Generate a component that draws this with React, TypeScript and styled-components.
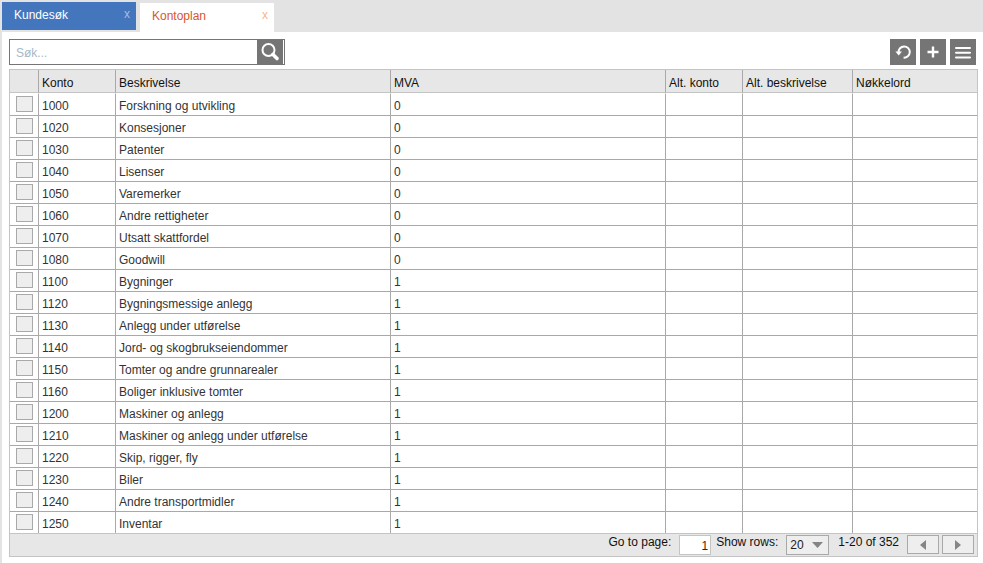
import React from "react";
import styled, { createGlobalStyle } from "styled-components";

const GlobalStyle = createGlobalStyle`
  *, *::before, *::after { box-sizing: border-box; }
  html, body { margin: 0; background: #fff; }
  body, button, input, select {
    font-family: "Liberation Sans", Arial, Helvetica, sans-serif;
    font-size: 12px;
  }
  body { color: #333; line-height: 16px; }
  button, input, select { margin: 0; padding: 0; border-radius: 0; }
`;

const Page = styled.div`
  min-height: 100vh;
  border-left: 2px solid #e3e3e3;
`;

const TabBar = styled.nav`
  display: flex;
  align-items: flex-end;
  gap: 4px;
  height: 32px;
  background: #e3e3e3;
`;

const Tab = styled.div<{ $active?: boolean }>`
  display: flex;
  justify-content: space-between;
  width: 134px;
  height: ${(p) => (p.$active ? 29 : 28)}px;
  margin-bottom: ${(p) => (p.$active ? 0 : 2)}px;
  padding: 5px 6px 0 12px;
  background: ${(p) => (p.$active ? "#fff" : "#4376bc")};
  color: ${(p) => (p.$active ? "#d9562b" : "#fff")};
`;

const TabLabel = styled.button`
  height: 16px;
  border: 0;
  background: none;
  color: inherit;
`;

const TabClose = styled.button<{ $active?: boolean }>`
  height: 14px;
  border: 0;
  background: none;
  line-height: 14px;
  color: ${(p) => (p.$active ? "#f1b795" : "#a5bee0")};
`;

const Toolbar = styled.div`
  display: flex;
  justify-content: space-between;
  padding: 7px 7px 4px;
`;

const SearchBox = styled.form`
  display: flex;
  width: 276px;
  height: 26px;
  padding-right: 1px;
  border: 1px solid #757575;
`;

const SearchInput = styled.input`
  flex: 1;
  min-width: 0;
  padding: 2px 6px 0;
  border: 0;
  outline: 0;
  &::placeholder { color: #a5bac8; opacity: 1; }
`;

const IconButton = styled.button`
  display: flex;
  align-items: center;
  justify-content: center;
  width: 26px;
  height: 100%;
  border: 0;
  background: #757575;
`;

const Actions = styled.div`
  display: flex;
  gap: 4px;
  height: 26px;
`;

const Panel = styled.section`
  margin: 0 5px 0 7px;
  border: 1px solid #c4c4c4;
`;

const Grid = styled.table`
  width: 100%;
  table-layout: fixed;
  border-spacing: 0;
`;

const Column = styled.col<{ $width?: number }>`
  width: ${(p) => (p.$width ? `${p.$width}px` : "auto")};
`;

const HeadCell = styled.th`
  height: 23px;
  padding: 3px 3px 0;
  border-right: 1px solid #a9a9a9;
  border-bottom: 1px solid #c4c4c4;
  background: #e7e7e7;
  color: #111;
  font-weight: normal;
  text-align: left;
  &:last-child { border-right: 0; }
`;

const Cell = styled.td`
  height: 22px;
  padding: 4px 3px 0;
  border-right: 1px solid #a9a9a9;
  border-top: 1px solid #a9a9a9;
  vertical-align: top;
  &:last-child { border-right: 0; }
  tr:first-child > & { border-top-color: #fff; }
`;

const CheckCell = styled(Cell)`
  padding: 2px 6px 0;
`;

const Checkbox = styled.input`
  appearance: none;
  display: block;
  width: 17px;
  height: 16px;
  margin: 0;
  border: 1px solid #a9a9a9;
  background: #eee;
  &:checked { background: #757575; }
`;

const Footer = styled.footer`
  display: flex;
  justify-content: flex-end;
  height: 23px;
  padding-right: 3px;
  border-top: 1px solid #c4c4c4;
  background: #e7e7e7;
  color: #111;
`;

const PagerLabel = styled.label`
  display: flex;
  gap: 8px;
  margin-right: 5px;
`;

const PageInput = styled.input`
  width: 32px;
  height: 20px;
  margin-top: 1px;
  padding: 1px 2px 0;
  border: 1px solid #c4c4c4;
  color: #8b0000;
  text-align: right;
`;

const SelectWrap = styled.span`
  display: grid;
  align-items: center;
  width: 43px;
  height: 20px;
  margin-top: 1px;
  margin-right: 4px;
  & > * { grid-area: 1 / 1; }
  & > svg { justify-self: end; margin-right: 6px; pointer-events: none; }
`;

const RowsSelect = styled.select`
  appearance: none;
  width: 100%;
  height: 20px;
  padding: 0 3px;
  border: 1px solid #a9a9a9;
  background: #eee;
  color: #222;
`;

const Range = styled.span`
  margin-right: 8px;
`;

const PageButton = styled.button`
  display: flex;
  align-items: center;
  justify-content: center;
  width: 32px;
  height: 19px;
  margin-top: 1px;
  margin-left: 3px;
  border: 1px solid #a9a9a9;
  background: #eee;
  &:first-of-type { margin-left: 0; }
`;

const accounts: [string, string, string][] = [
  ["1000", "Forskning og utvikling", "0"],
  ["1020", "Konsesjoner", "0"],
  ["1030", "Patenter", "0"],
  ["1040", "Lisenser", "0"],
  ["1050", "Varemerker", "0"],
  ["1060", "Andre rettigheter", "0"],
  ["1070", "Utsatt skattfordel", "0"],
  ["1080", "Goodwill", "0"],
  ["1100", "Bygninger", "1"],
  ["1120", "Bygningsmessige anlegg", "1"],
  ["1130", "Anlegg under utførelse", "1"],
  ["1140", "Jord- og skogbrukseiendommer", "1"],
  ["1150", "Tomter og andre grunnarealer", "1"],
  ["1160", "Boliger inklusive tomter", "1"],
  ["1200", "Maskiner og anlegg", "1"],
  ["1210", "Maskiner og anlegg under utførelse", "1"],
  ["1220", "Skip, rigger, fly", "1"],
  ["1230", "Biler", "1"],
  ["1240", "Andre transportmidler", "1"],
  ["1250", "Inventar", "1"],
];

const headings = ["Konto", "Beskrivelse", "MVA", "Alt. konto", "Alt. beskrivelse", "Nøkkelord"];

export default function App() {
  return (
    <>
      <GlobalStyle />
      <Page>
        <TabBar>
          <Tab>
            <TabLabel type="button">Kundesøk</TabLabel>
            <TabClose type="button" aria-label="Lukk Kundesøk">x</TabClose>
          </Tab>
          <Tab $active>
            <TabLabel type="button">Kontoplan</TabLabel>
            <TabClose type="button" $active aria-label="Lukk Kontoplan">x</TabClose>
          </Tab>
        </TabBar>
        <Toolbar>
          <SearchBox onSubmit={(e) => e.preventDefault()}>
            <SearchInput type="text" placeholder="Søk..." aria-label="Søk" />
            <IconButton type="submit" aria-label="Søk">
              <svg width="20" height="20" viewBox="0 0 20 20" fill="none" stroke="#fff">
                <circle cx="8.5" cy="8" r="6" strokeWidth="2" />
                <path d="M13 12.5 L17 16.5" strokeWidth="3.6" strokeLinecap="round" />
              </svg>
            </IconButton>
          </SearchBox>
          <Actions>
            <IconButton type="button" aria-label="Oppdater">
              <svg width="18" height="18" viewBox="0 0 18 18" fill="none">
                <path d="M4.6 9.5 A5.6 5.6 0 1 1 9.6 14.6" stroke="#fff" strokeWidth="2" />
                <path d="M1.4 8.4 H8 L4.7 12.4 Z" fill="#fff" />
              </svg>
            </IconButton>
            <IconButton type="button" aria-label="Ny">
              <svg width="12" height="12" viewBox="0 0 12 12">
                <path d="M6 0.5 V11.5 M0.5 6 H11.5" stroke="#fff" strokeWidth="2.4" />
              </svg>
            </IconButton>
            <IconButton type="button" aria-label="Meny">
              <svg width="16" height="14" viewBox="0 0 16 14">
                <path d="M1 3 H15 M1 7.7 H15 M1 12.4 H15" stroke="#fff" strokeWidth="2" strokeLinecap="round" />
              </svg>
            </IconButton>
          </Actions>
        </Toolbar>
        <Panel>
          <Grid>
            <colgroup>
              <Column $width={29} />
              <Column $width={77} />
              <Column />
              <Column />
              <Column $width={77} />
              <Column $width={110} />
              <Column $width={124} />
            </colgroup>
            <thead>
              <tr>
                <HeadCell aria-label="Velg" />
                {headings.map((h) => (
                  <HeadCell key={h} scope="col">{h}</HeadCell>
                ))}
              </tr>
            </thead>
            <tbody>
              {accounts.map(([no, name, vat]) => (
                <tr key={no}>
                  <CheckCell>
                    <Checkbox type="checkbox" aria-label={`Velg ${no}`} />
                  </CheckCell>
                  <Cell>{no}</Cell>
                  <Cell>{name}</Cell>
                  <Cell>{vat}</Cell>
                  <Cell />
                  <Cell />
                  <Cell />
                </tr>
              ))}
            </tbody>
          </Grid>
          <Footer>
            <PagerLabel>
              Go to page:
              <PageInput type="text" defaultValue="1" />
            </PagerLabel>
            <PagerLabel>
              Show rows:
              <SelectWrap>
                <RowsSelect defaultValue="20">
                  <option>10</option>
                  <option>20</option>
                  <option>50</option>
                </RowsSelect>
                <svg width="11" height="6" viewBox="0 0 11 6">
                  <path d="M0 0 H11 L5.5 6 Z" fill="#858585" />
                </svg>
              </SelectWrap>
            </PagerLabel>
            <Range>1-20 of 352</Range>
            <PageButton type="button" aria-label="Previous page">
              <svg width="6" height="10" viewBox="0 0 6 10">
                <path d="M6 0 V10 L0 5 Z" fill="#858585" />
              </svg>
            </PageButton>
            <PageButton type="button" aria-label="Next page">
              <svg width="6" height="10" viewBox="0 0 6 10">
                <path d="M0 0 V10 L6 5 Z" fill="#858585" />
              </svg>
            </PageButton>
          </Footer>
        </Panel>
      </Page>
    </>
  );
}
